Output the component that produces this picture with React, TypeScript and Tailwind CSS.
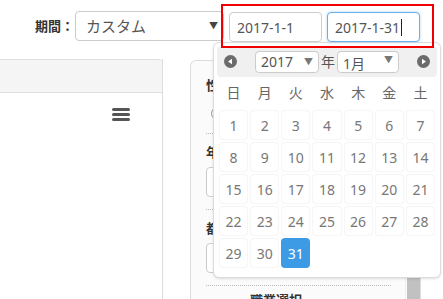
const DAY_NAMES = ["日", "月", "火", "水", "木", "金", "土"]
const DAYS = Array.from({ length: 31 }, (_, i) => i + 1)

const CircleArrow = ({ dir }: { dir: "left" | "right" }) => (
  <svg width="13" height="13" viewBox="0 0 13 13">
    <circle cx="6.5" cy="6.5" r="6.5" fill="#6b6b6b" />
    {dir === "left" ? (
      <polygon points="4,6.5 8,3.8 8,9.2" fill="#fff" />
    ) : (
      <polygon points="9,6.5 5,3.8 5,9.2" fill="#fff" />
    )}
  </svg>
)

const Field = ({ label, children, first }: { label: string; children?: React.ReactNode; first?: boolean }) => (
  <div className={first ? "border-b border-dotted border-[#bbb] pb-[13px] pt-[15px]" : "border-b border-dotted border-[#bbb] pb-[12px] pt-[9px]"}>
    <div className="h-[18px] text-[13px] font-bold leading-[18px] text-[#333]">{label}</div>
    {children}
  </div>
)

function Calendar() {
  return (
    <div className="absolute left-[213px] top-[42px] w-[228px] rounded-md border border-[#ddd] bg-white p-[3px] shadow-sm">
      <div className="flex h-[31px] items-center rounded bg-[#f0f0f0] pl-[7px] pr-[7px]">
        <CircleArrow dir="left" />
        <div className="ml-[18px] flex h-[22px] w-[64px] items-center justify-between rounded border border-[#ccc] bg-white pl-[5px] pr-[5px] text-[14px] text-[#555]">
          <span>2017</span>
          <span className="text-[9px] text-[#777]">▼</span>
        </div>
        <span className="ml-[2px] text-[14px] text-[#555]">年</span>
        <div className="ml-[2px] flex h-[22px] w-[62px] items-start justify-between rounded border border-[#ccc] bg-white pl-[5px] pr-[5px] pt-[1px] text-[14px] text-[#555]">
          <span>1月</span>
          <span className="text-[9px] text-[#777]">▼</span>
        </div>
        <div className="ml-auto">
          <CircleArrow dir="right" />
        </div>
      </div>
      <div className="mt-[5px] grid grid-cols-7 gap-x-[2px] px-[2px] text-[14px] text-[#666]">
        {DAY_NAMES.map(d => (
          <div key={d} className="flex h-[20px] items-center justify-center">{d}</div>
        ))}
      </div>
      <div className="mt-[8px] grid grid-cols-7 gap-[2px] px-[2px] pb-[6px] text-[14px] text-[#777]">
        {DAYS.map(d => (
          <div
            key={d}
            className={
              d === 31
                ? "flex h-[30px] items-center justify-center rounded bg-[#3d9be5] text-white"
                : "flex h-[30px] items-center justify-center rounded-sm border border-[#f6f6f6] bg-white shadow-[0_0_1px_rgba(0,0,0,0.04)]"
            }
          >
            {d}
          </div>
        ))}
      </div>
    </div>
  )
}

export default function App() {
  return (
    <div className="relative h-[299px] w-[443px] overflow-hidden bg-white font-['Noto_Sans','Noto_Sans_CJK_JP',sans-serif] text-[#333]">
      <div className="flex h-[59px] items-start">
        <span className="ml-[35px] mt-[17px] text-[13px] font-bold text-[#333]">期間：</span>
        <div className="ml-[1px] mt-[11px] flex h-[30px] w-[149px] items-center justify-between rounded border border-[#ccc] bg-white pl-[10px] pr-[5px] text-[15px] text-[#555]">
          <span>カスタム</span>
          <span className="text-[9px] text-[#444]">▼</span>
        </div>
        <div className="relative z-10 -ml-[3px] mt-[4px] flex h-[44px] w-[213px] gap-[5px] border-2 border-[#f00000] pl-[6px] pt-[6px]">
          <div className="flex h-[30px] w-[93px] items-center rounded border border-[#ccc] bg-white pl-[7px] text-[14px] text-[#555]">
            2017-1-1
          </div>
          <div className="flex h-[30px] w-[93px] items-center rounded border border-[#66afe9] bg-white pl-[7px] text-[14px] text-[#555] shadow-[0_0_3px_rgba(102,175,233,0.5)]">
            2017-1-31
            <span className="ml-[1px] h-[17px] w-[1px] bg-[#222]" />
          </div>
        </div>
      </div>

      <div className="flex">
        <div className="h-[240px] w-[163px] shrink-0 border-r border-[#ddd]">
          <div className="h-[34px] rounded-tr border-b border-t border-[#ddd] bg-[#f5f5f5]" />
          <div className="flex justify-end pr-[32px] pt-[15px]">
            <div className="flex w-[18px] flex-col gap-[2px]">
              <span className="h-[3px] rounded-sm bg-[#555]" />
              <span className="h-[3px] rounded-sm bg-[#555]" />
              <span className="h-[3px] rounded-sm bg-[#555]" />
            </div>
          </div>
        </div>

        <div className="ml-[27px] mt-[1px] flex h-[240px] w-[231px] shrink-0 rounded-tl-md border-l border-r border-t border-[#ddd] bg-[#fbfbfb]">
          <div className="flex-1 pl-[15px] pr-[14px]">
            <Field label="性別" first>
              <div className="mt-[13px] flex h-[13px] items-center gap-[6px] pl-[5px]">
                <span className="h-[13px] w-[13px] rounded-full border border-[#999] bg-white" />
                <span className="text-[13px]">男性</span>
                <span className="h-[13px] w-[13px] rounded-full border border-[#999] bg-white" />
                <span className="text-[13px]">女性</span>
              </div>
            </Field>
            <Field label="年齢">
              <div className="mt-[6px] h-[30px] rounded border border-[#ccc] bg-white" />
            </Field>
            <Field label="都道府県">
              <div className="mt-[6px] h-[30px] rounded border border-[#ccc] bg-white" />
            </Field>
            <div className="pl-[44px] pt-[5px] text-[13px] font-bold">職業選択</div>
          </div>
          <div className="flex w-[15px] flex-col justify-end border-l border-[#eee]">
            <div className="ml-[1px] h-[130px] w-[13px] bg-[#c1c1c1]" />
          </div>
        </div>
      </div>

      <Calendar />
    </div>
  )
}
